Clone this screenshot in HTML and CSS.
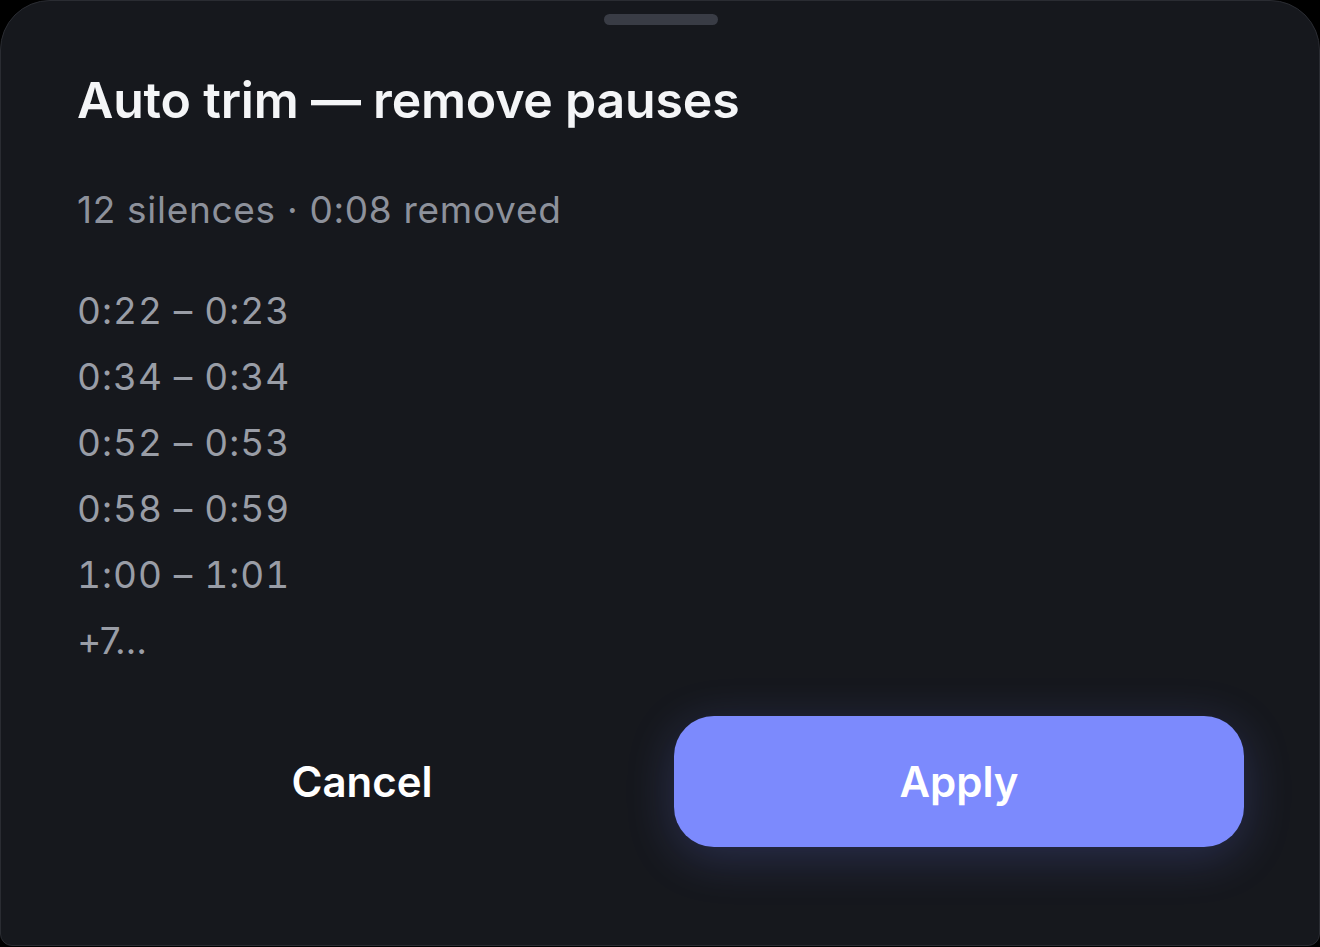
FILE: index.html
```html
<!DOCTYPE html>
<html>
<head>
  <title>Auto trim</title>
  <meta name="viewport" content="width=device-width, initial-scale=1">
  <link rel="stylesheet" href="styles.css">
</head>
<body>
  <div class="sheet">
    <div class="handle"></div>

    <h1 class="title">Auto trim — remove pauses</h1>
    <p class="summary">12 silences · 0:08 removed</p>

    <ul class="ranges">
      <li>0:22 – 0:23</li>
      <li>0:34 – 0:34</li>
      <li>0:52 – 0:53</li>
      <li>0:58 – 0:59</li>
      <li>1:00 – 1:01</li>
      <li class="more">+7…</li>
    </ul>

    <div class="actions">
      <button class="btn cancel">Cancel</button>
      <button class="btn apply">Apply</button>
    </div>
  </div>
</body>
</html>
```

FILE: styles.css
```css
html, body {
  margin: 0;
  background: #000;
  font-family: Inter, "Noto Sans", sans-serif;
}
.sheet {
  box-sizing: border-box;
  height: 946px;
  background: #16181d;
  border: 1px solid #2a2c32;
  border-radius: 50px 50px 12px 12px;
  padding: 13px 75px 0 76px;
}
.handle {
  width: 114px;
  height: 11px;
  margin: 0 auto;
  border-radius: 6px;
  background: #393c45;
}
.title {
  margin: 47px 0 0;
  font-size: 50px;
  line-height: 56px;
  font-weight: 600;
  color: #f4f5f7;
  letter-spacing: -0.2px;
}
.summary {
  margin: 60px 0 0;
  font-size: 37px;
  line-height: 44px;
  color: #8d919b;
  letter-spacing: 0.7px;
}
.ranges {
  list-style: none;
  margin: 46px 0 0;
  padding: 0;
  font-size: 37px;
  line-height: 66px;
  color: #999da6;
  letter-spacing: 1px;
  font-variant-numeric: tabular-nums;
}
.ranges .more {
  letter-spacing: -1px;
  font-variant-numeric: normal;
}
.actions {
  display: flex;
  gap: 27px;
  margin-top: 42px;
}
.btn {
  flex: 1;
  height: 131px;
  border: none;
  border-radius: 40px;
  font-family: inherit;
  font-size: 42px;
  font-weight: 600;
  color: #fff;
  cursor: pointer;
}
.cancel {
  background: transparent;
}
.apply {
  background: #7c8afd;
  box-shadow: 0 10px 48px rgba(112, 126, 255, 0.22);
}
```
